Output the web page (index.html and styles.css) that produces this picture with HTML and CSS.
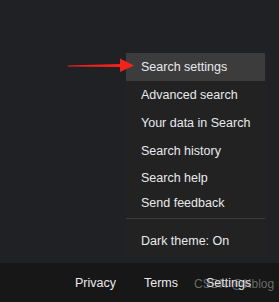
FILE: index.html
```html
<!DOCTYPE html>
<html lang="en">
  <head>
    <meta charset="UTF-8" />
    <meta name="viewport" content="width=device-width, initial-scale=1.0" />
    <title>settings menu</title>
    <link rel="stylesheet" href="styles.css">
  </head>

  <body>
    <main class="side">
      <ul class="menu">
        <li class="item aktiv">Search settings</li>
        <li class="item">Advanced search</li>
        <li class="item">Your data in Search</li>
        <li class="item">Search history</li>
        <li class="item mellem">Search help</li>
        <li class="item lille">Send feedback</li>
        <li class="linje"></li>
        <li class="item lille">Dark theme: On</li>
      </ul>

      <!-- pil der peger paa menuen -->
      <svg class="pil" width="70" height="20" viewBox="0 0 70 20">
        <polygon points="0,7.5 52,6 52,0.5 66,7.5 52,14 52,9 0,8.5" fill="#f5221c" />
      </svg>
    </main>

    <footer>
      <a href="#">Privacy</a>
      <a href="#">Terms</a>
      <a href="#">Settings</a>
      <span class="vandmaerke">CSDN @Kblog</span>
    </footer>
  </body>
</html>
```

FILE: styles.css
```css
html,
body {
  margin: 0;
  padding: 0;
}

body {
  background-color: #202124;
  font-family: "Liberation Sans", Arial, sans-serif;
  color: #e8eaed;
  height: 302px;
  display: flex;
  flex-direction: column;
  overflow: hidden;
}

.side {
  position: relative;
  height: 263px;
  padding-top: 53px;
  box-sizing: border-box;
}

.menu {
  list-style: none;
  margin: 0 0 0 126px;
  padding: 0 2px 4px 0;
  width: 139px;
  background-color: #222222;
}

.item {
  height: 28px;
  line-height: 28px;
  padding-left: 15px;
  font-size: 12.5px;
  white-space: nowrap;
}

.mellem {
  height: 26px;
  line-height: 26px;
}

.lille {
  height: 24px;
  line-height: 24px;
}

.aktiv {
  background-color: #3c3c3c;
}

.linje {
  height: 1px;
  margin: 3px 0 10px 0;
  background-color: #3c3c3c;
}

.pil {
  position: absolute;
  left: 68px;
  top: 58px;
}

footer {
  position: relative;
  flex: 1;
  background-color: #171717;
  display: flex;
  gap: 28px;
  padding-left: 75px;
  align-items: center;
}

footer a {
  color: #e8eaed;
  text-decoration: none;
  font-size: 12.5px;
}

.vandmaerke {
  position: absolute;
  left: 194px;
  top: 14px;
  font-size: 12px;
  white-space: nowrap;
  color: rgba(190, 190, 190, 0.5);
}
```
